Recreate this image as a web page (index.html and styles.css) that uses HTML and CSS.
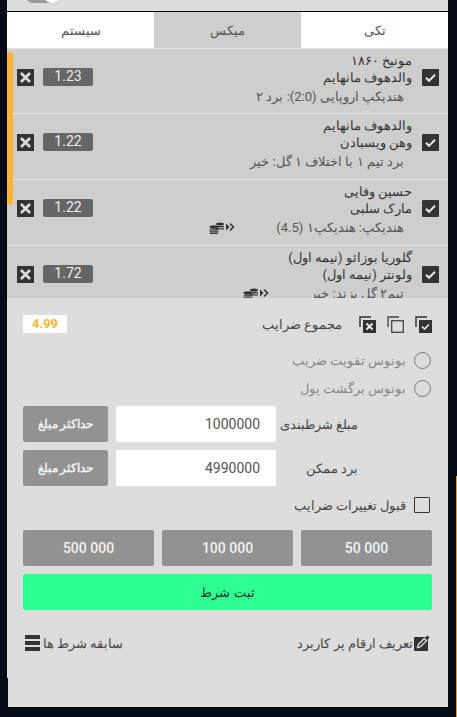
FILE: index.html
```html
<!DOCTYPE html>
<html lang="fa">
<head>
<meta charset="utf-8">
<title>Betslip</title>
<link rel="stylesheet" href="styles.css">
</head>
<body>
<div class="edge"></div>
<main class="slip" dir="rtl">
  <div class="topbar"><div class="toggle"><span class="knob"></span></div></div>
  <nav class="tabs">
    <div class="tab">تکی</div>
    <div class="tab active">میکس</div>
    <div class="tab">سیستم</div>
  </nav>
  <section class="list">
    <div class="scroll"></div>
    <article class="row">
      <svg class="box" viewBox="0 0 17 17"><rect width="17" height="17" rx="1" fill="#333"/><path d="M4 8.8l3 3 6-6" fill="none" stroke="#e8e8e8" stroke-width="2"/></svg>
      <div class="teams"><div>مونیخ ۱۸۶۰</div><div>والدهوف مانهایم</div><div class="market"><span>هندیکپ اروپایی (2:0): برد ۲</span></div></div>
      <div class="odd">1.23</div>
      <svg class="box" viewBox="0 0 17 17"><rect width="17" height="17" fill="#333"/><path d="M4 4l9 9M13 4l-9 9" stroke="#ddd" stroke-width="2.6"/></svg>
    </article>
    <article class="row">
      <svg class="box" viewBox="0 0 17 17"><rect width="17" height="17" rx="1" fill="#333"/><path d="M4 8.8l3 3 6-6" fill="none" stroke="#e8e8e8" stroke-width="2"/></svg>
      <div class="teams"><div>والدهوف مانهایم</div><div>وهن ویسبادن</div><div class="market"><span>برد تیم ۱ با اختلاف ۱ گل: خیر</span></div></div>
      <div class="odd">1.22</div>
      <svg class="box" viewBox="0 0 17 17"><rect width="17" height="17" fill="#333"/><path d="M4 4l9 9M13 4l-9 9" stroke="#ddd" stroke-width="2.6"/></svg>
    </article>
    <article class="row">
      <svg class="box" viewBox="0 0 17 17"><rect width="17" height="17" rx="1" fill="#333"/><path d="M4 8.8l3 3 6-6" fill="none" stroke="#e8e8e8" stroke-width="2"/></svg>
      <div class="teams"><div>حسین وفایی</div><div>مارک سلبی</div><div class="market"><span>هندیکپ: هندیکپ۱ (4.5)</span>
        <svg class="coins" viewBox="0 0 27 13"><g fill="#333"><ellipse cx="11" cy="3" rx="4" ry="1.6"/><path d="M7 5h8v1.2H7zM7 7.2h8v1.2H7z"/><ellipse cx="5" cy="6" rx="4.5" ry="1.8"/><path d="M.5 8.2h9v1.2h-9zM.5 10.2h9v1.2h-9zM1 12h8v1H1z"/><path d="M17 2.5l3.5 3.5-3.5 3.500z"/><path d="M21 2.500l3.500 3.500-3.500 3.500" fill="none" stroke="#333" stroke-width="1.600"/></g></svg></div></div>
      <div class="odd">1.22</div>
      <svg class="box" viewBox="0 0 17 17"><rect width="17" height="17" fill="#333"/><path d="M4 4l9 9M13 4l-9 9" stroke="#ddd" stroke-width="2.6"/></svg>
    </article>
    <article class="row">
      <svg class="box" viewBox="0 0 17 17"><rect width="17" height="17" rx="1" fill="#333"/><path d="M4 8.8l3 3 6-6" fill="none" stroke="#e8e8e8" stroke-width="2"/></svg>
      <div class="teams"><div>گلوریا بوزائو (نیمه اول)</div><div>ولونتر (نیمه اول)</div><div class="market"><span>تیم۲ گل بزند: خیر</span>
        <svg class="coins" viewBox="0 0 27 13"><g fill="#333"><ellipse cx="11" cy="3" rx="4" ry="1.6"/><path d="M7 5h8v1.2H7zM7 7.2h8v1.2H7z"/><ellipse cx="5" cy="6" rx="4.5" ry="1.8"/><path d="M.5 8.2h9v1.2h-9zM.5 10.2h9v1.2h-9zM1 12h8v1H1z"/><path d="M17 2.5l3.5 3.5-3.5 3.500z"/><path d="M21 2.500l3.500 3.500-3.500 3.500" fill="none" stroke="#333" stroke-width="1.600"/></g></svg></div></div>
      <div class="odd">1.72</div>
      <svg class="box" viewBox="0 0 17 17"><rect width="17" height="17" fill="#333"/><path d="M4 4l9 9M13 4l-9 9" stroke="#ddd" stroke-width="2.6"/></svg>
    </article>
  </section>
  <section class="panel">
    <div class="total">
      <svg class="mini" viewBox="0 0 17 17"><path d="M1 11V1h11" fill="none" stroke="#333" stroke-width="1.500"/><rect x="4" y="4" width="13" height="13" fill="#333"/><path d="M7 10.500l2.500 2.500 4.500-4.500" fill="none" stroke="#eee" stroke-width="1.600"/></svg>
      <svg class="mini" viewBox="0 0 17 17"><path d="M1 11V1h11" fill="none" stroke="#444" stroke-width="1.300"/><rect x="4.700" y="4.700" width="11.600" height="11.600" fill="none" stroke="#444" stroke-width="1.300"/></svg>
      <svg class="mini" viewBox="0 0 17 17"><path d="M1 11V1h11" fill="none" stroke="#333" stroke-width="1.500"/><rect x="4" y="4" width="13" height="13" fill="#333"/><path d="M7.500 7.500l6 6M13.500 7.500l-6 6" stroke="#eee" stroke-width="1.800"/></svg>
      <span class="total-label">مجموع ضرایب</span>
      <span class="total-value">4.99</span>
    </div>
    <label class="radio first"><i></i><span>بونوس تقویت ضریب</span></label>
    <label class="radio"><i></i><span>بونوس برگشت پول</span></label>
    <div class="field stake">
      <span class="field-label">مبلغ شرطبندی</span>
      <div class="input">1000000</div>
      <button class="max">حداکثر مبلغ</button>
    </div>
    <div class="field">
      <span class="field-label">برد ممکن</span>
      <div class="input">4990000</div>
      <button class="max">حداکثر مبلغ</button>
    </div>
    <label class="accept"><i></i><span>قبول تغییرات ضرایب</span></label>
    <div class="quick">
      <button>50 000</button>
      <button>100 000</button>
      <button>500 000</button>
    </div>
    <button class="submit">ثبت شرط</button>
    <div class="links">
      <div class="link">
        <svg class="pen" viewBox="0 0 16 16"><rect y="2" width="14" height="14" fill="#333"/><path d="M3.500 12.500l.8-3 6-6 2.200 2.200-6 6z" fill="none" stroke="#e4e4e4" stroke-width="1.300"/><path d="M12 2l1.500-1.500 2 2L14 4z" fill="#333"/></svg>
        <span>تعریف ارقام پر کاربرد</span>
      </div>
      <div class="link">
        <span>سابقه شرط ها</span>
        <div class="bars"><b></b><b></b><b></b></div>
      </div>
    </div>
  </section>
  <div class="foot"></div>
</main>
</body>
</html>
```

FILE: styles.css
```css
* { box-sizing: border-box; }
html, body { margin: 0; height: 717px; overflow: hidden; }
body {
  position: relative;
  background: #060b13;
  font-family: "Roboto", sans-serif;
  color: #333;
}
.edge { position: absolute; left: 456px; top: 476px; width: 1px; height: 241px; background: #d9a02f; }
.slip { width: 441px; margin-left: 7px; }
.topbar { height: 12px; background: #ddd; border-bottom: 1px solid #000; overflow: hidden; direction: ltr; padding-left: 19px; }
.toggle { width: 35px; height: 14px; margin-top: -11px; border-radius: 7px; background: #999; display: flex; justify-content: flex-end; }
.knob { width: 17px; height: 14px; border-radius: 50%; background: #fff; }
.tabs { display: flex; height: 36px; }
.tab { flex: 1; background: #fff; display: flex; align-items: center; justify-content: center; font-size: 13px; color: #555; }
.tab.active { background: #cecece; }
.list { position: relative; height: 250px; overflow: hidden; background: #cecece; }
.scroll { position: absolute; left: 0; top: 4px; width: 6px; height: 153px; border-radius: 3px; background: #fdb62f; }
.row { height: 66px; border-top: 1px solid #e3e3e3; border-bottom: 1px solid #e3e3e3; display: flex; align-items: flex-start; padding: 3px 9px 0 10px; }
.row + .row { border-top: 0; }
.row .box { width: 17px; height: 17px; flex: none; margin-top: 17px; }
.teams { flex: 1; margin-right: 10px; font-size: 13px; line-height: 17px; color: #333; white-space: nowrap; }
.market { display: flex; align-items: center; margin-top: 2px; padding-right: 8px; color: #555; }
.coins { width: 27px; height: 13px; margin-right: 40px; flex: none; }
.odd { flex: none; width: 50px; height: 18px; margin: 16px 0 0 9px; border-radius: 2px; background: #666; color: #eee; font-size: 14px; line-height: 17px; text-align: center; direction: ltr; }
.panel { background: #ddd; padding: 17px 16px 0; height: 380px; }
.total { display: flex; align-items: center; height: 18px; }
.mini { width: 17px; height: 17px; flex: none; margin-left: 11px; }
.total-label { font-size: 13px; margin-right: 6px; color: #444; }
.total-value { margin-right: auto; width: 44px; height: 18px; background: #fff; color: #fdb62f; font-weight: 700; font-size: 13px; line-height: 18px; text-align: center; direction: ltr; }
.radio { display: flex; align-items: center; height: 18px; color: #888; font-size: 13px; margin-top: 10px; gap: 8px; padding-right: 1px; }
.radio.first { margin-top: 18px; }
.radio i { width: 17px; height: 17px; border: 1.500px solid #777; border-radius: 50%; flex: none; }
.field { display: flex; align-items: center; height: 36px; margin-top: 8px; }
.stake { margin-top: 9px; }
.field-label { flex: 1; padding-right: 0; font-size: 13px; color: #444; margin-right: 74px; white-space: nowrap; }
.input { width: 160px; height: 36px; background: #fff; border-radius: 2px; color: #555; font-size: 14px; line-height: 36px; text-align: right; padding-right: 16px; direction: ltr; }
.max { width: 85px; height: 36px; margin-right: 8px; flex: none; }
button { border: 0; background: #929292; color: #f2f2f2; border-radius: 2px; font: 700 12px "Roboto", sans-serif; padding: 0; }
.accept { display: flex; align-items: center; height: 18px; margin-top: 10px; gap: 8px; font-size: 13px; color: #444; padding-right: 2px; }
.accept i { width: 16px; height: 16px; border: 1.500px solid #333; border-radius: 1px; flex: none; }
.quick { display: flex; gap: 8px; margin-top: 16px; }
.quick button { flex: 1; height: 36px; font-size: 14px; font-weight: 500; direction: ltr; }
.submit { display: block; width: 100%; height: 36px; margin-top: 8px; background: #2bff92; color: #333; font-size: 13px; font-weight: 400; }
.links { display: flex; justify-content: space-between; align-items: center; margin-top: 25px; font-size: 13px; color: #444; padding: 0 2px; }
.link { display: flex; align-items: center; gap: 1px; }
.pen { width: 16px; height: 16px; flex: none; }
.bars { display: flex; flex-direction: column; gap: 2px; width: 15px; margin-right: 2px; }
.bars b { display: block; height: 4px; background: #333; }
.foot { height: 29px; margin-left: 1px; background: #ddd; }
```
